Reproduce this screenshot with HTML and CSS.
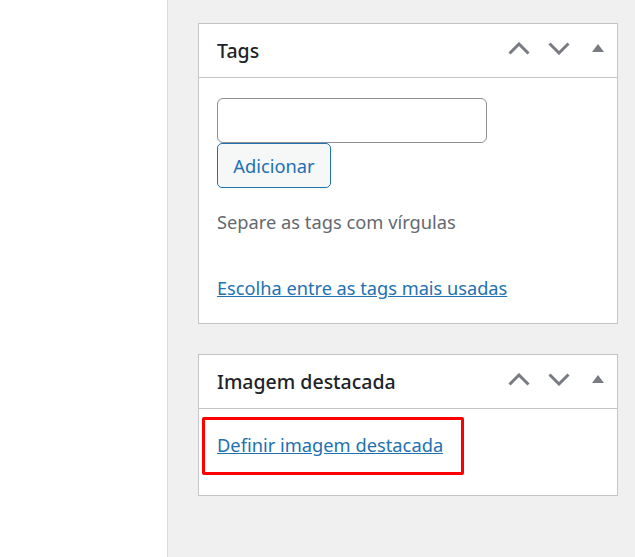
FILE: index.html
```html
<!DOCTYPE html>
<html lang="pt">
<head>
<meta charset="utf-8">
<link rel="stylesheet" href="styles.css">
</head>
<body>
<div class="page">
  <div class="leftpane"></div>
  <div class="sidebar">
    <div class="postbox">
      <div class="hndle">
        <h2 class="title">Tags</h2>
        <div class="actions">
          <button class="hbtn up" aria-label="Mover para cima">
            <svg width="22" height="13" viewBox="0 0 22 13"><path d="M1.5 11.5 L11 2 L20.5 11.5" fill="none" stroke="#787c82" stroke-width="3"/></svg>
          </button>
          <button class="hbtn down" aria-label="Mover para baixo">
            <svg width="22" height="13" viewBox="0 0 22 13"><path d="M1.5 1.5 L11 11 L20.5 1.5" fill="none" stroke="#787c82" stroke-width="3"/></svg>
          </button>
          <button class="hbtn toggle" aria-label="Alternar painel">
            <svg width="12" height="8" viewBox="0 0 12 8"><path d="M6 0 L12 8 L0 8 Z" fill="#787c82"/></svg>
          </button>
        </div>
      </div>
      <div class="inside tags-inside">
        <input class="tag-input" type="text">
        <button class="add-btn">Adicionar</button>
        <p class="howto">Separe as tags com vírgulas</p>
        <p class="cloud"><a href="#">Escolha entre as tags mais usadas</a></p>
      </div>
    </div>

    <div class="postbox second">
      <div class="hndle">
        <h2 class="title">Imagem destacada</h2>
        <div class="actions">
          <button class="hbtn up" aria-label="Mover para cima">
            <svg width="22" height="13" viewBox="0 0 22 13"><path d="M1.5 11.5 L11 2 L20.5 11.5" fill="none" stroke="#787c82" stroke-width="3"/></svg>
          </button>
          <button class="hbtn down" aria-label="Mover para baixo">
            <svg width="22" height="13" viewBox="0 0 22 13"><path d="M1.5 1.5 L11 11 L20.5 1.5" fill="none" stroke="#787c82" stroke-width="3"/></svg>
          </button>
          <button class="hbtn toggle" aria-label="Alternar painel">
            <svg width="12" height="8" viewBox="0 0 12 8"><path d="M6 0 L12 8 L0 8 Z" fill="#787c82"/></svg>
          </button>
        </div>
      </div>
      <div class="inside thumb-inside">
        <div class="highlight">
          <a href="#">Definir imagem destacada</a>
        </div>
      </div>
    </div>
  </div>
</div>
</body>
</html>
```

FILE: styles.css
```css
html, body {
  margin: 0;
  padding: 0;
  height: 100%;
  background: #f0f0f1;
  font-family: "Noto Sans", "Open Sans", sans-serif;
}

.page {
  display: flex;
  min-height: 557px;
}

.leftpane {
  width: 167px;
  flex: none;
  background: #ffffff;
  border-right: 1px solid #dcdcde;
}

.sidebar {
  flex: none;
  width: 420px;
  padding: 23px 0 0 30px;
}

.postbox {
  background: #fff;
  border: 1px solid #c3c4c7;
}

.postbox.second {
  margin-top: 30px;
}

.hndle {
  display: flex;
  align-items: center;
  height: 53px;
  border-bottom: 1px solid #c3c4c7;
}

.title {
  flex: 1;
  margin: 0;
  padding-left: 18px;
  font-size: 19.5px;
  font-weight: 500;
  color: #1d2327;
}

.actions {
  display: flex;
  height: 100%;
}

.hbtn {
  border: 0;
  background: transparent;
  padding: 0;
  margin: 0;
  height: 100%;
  display: flex;
  align-items: center;
  justify-content: center;
}

.hbtn.up, .hbtn.down {
  width: 40px;
}

.hbtn.up svg, .hbtn.down svg {
  margin-top: -5px;
}

.hbtn.toggle {
  width: 38px;
}

.hbtn.toggle svg {
  margin-top: -6px;
}

.inside {
  padding: 0 18px;
}

.tags-inside {
  padding-top: 20px;
  padding-bottom: 21px;
}

.tag-input {
  display: block;
  box-sizing: border-box;
  width: 270px;
  height: 45px;
  margin: 0;
  border: 1px solid #8c8f94;
  border-radius: 6px;
  background: #fff;
}

.add-btn {
  display: block;
  box-sizing: border-box;
  height: 45px;
  width: 114px;
  margin: 0;
  padding: 0;
  border: 1px solid #2271b1;
  border-radius: 5px;
  background: #f6f7f7;
  color: #2271b1;
  font-family: inherit;
  font-size: 18.3px;
}

.howto {
  margin: 20px 0 0;
  font-size: 18.3px;
  line-height: 27px;
  color: #646970;
}

.cloud {
  margin: 40px 0 0;
  font-size: 18.2px;
  line-height: 27px;
}

a {
  color: #2271b1;
  text-decoration: underline;
}

.thumb-inside {
  padding: 8px 0 20px 3px;
}

.highlight {
  width: 244px;
  height: 52px;
  border: 3px solid #ff0000;
  border-radius: 2px;
  padding-left: 12px;
  font-size: 18.3px;
  line-height: 50px;
  box-sizing: content-box;
}
```
